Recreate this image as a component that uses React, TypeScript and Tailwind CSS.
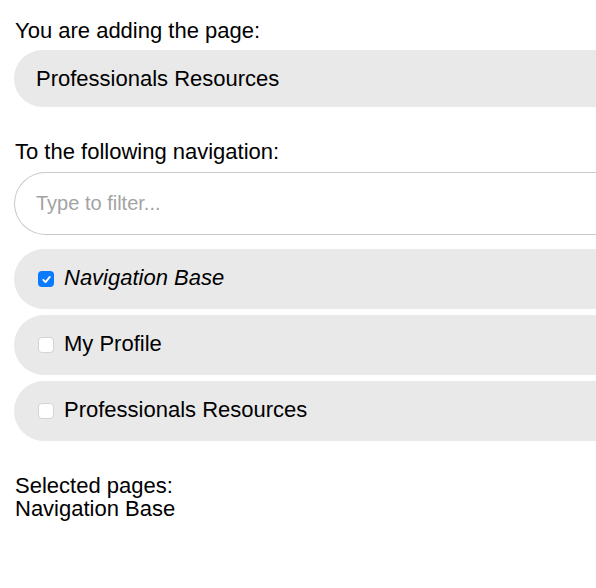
import React from "react";

const pages = [
  { name: "Navigation Base", checked: true },
  { name: "My Profile", checked: false },
  { name: "Professionals Resources", checked: false },
];

const Check: React.FC<{ checked: boolean }> = ({ checked }) =>
  checked ? (
    <span className="flex h-[16px] w-[16px] items-center justify-center rounded-[4px] bg-[#0a7aff]">
      <svg width="11" height="11" viewBox="0 0 12 12" fill="none">
        <path
          d="M2.5 6.3 L5 8.8 L9.6 3.2"
          stroke="white"
          strokeWidth="2"
          strokeLinecap="round"
          strokeLinejoin="round"
        />
      </svg>
    </span>
  ) : (
    <span className="h-[16px] w-[16px] rounded-[4px] border border-[#d4d4d4] bg-white" />
  );

const App: React.FC = () => {
  return (
    <div
      className="min-h-screen overflow-hidden bg-white pl-[14px] pt-[19px] text-[22px] leading-[23px] text-black"
      style={{ fontFamily: '"Liberation Sans", Arial, sans-serif' }}
    >
      <p className="pl-[1px]">You are adding the page:</p>
      <div className="mt-[8px] flex h-[57px] items-center rounded-l-[29px] bg-[#e9e9e9] pl-[22px]">
        Professionals Resources
      </div>

      <p className="mt-[33px] pl-[1px]">To the following navigation:</p>
      <input
        type="text"
        placeholder="Type to filter..."
        className="mt-[9px] block h-[63px] w-full rounded-l-[32px] border border-r-0 border-[#c9c9c9] bg-white pl-[21px] text-[20px] outline-none placeholder:text-[#a3a3a3]"
      />

      <ul className="mt-[14px] flex flex-col gap-[6px]">
        {pages.map((page) => (
          <li
            key={page.name}
            className="flex h-[60px] items-center gap-[10px] rounded-l-[30px] bg-[#e9e9e9] pl-[24px]"
          >
            <Check checked={page.checked} />
            <span className={page.checked ? "mb-[4px] italic" : "mb-[4px]"}>
              {page.name}
            </span>
          </li>
        ))}
      </ul>

      <div className="mt-[33px] pl-[1px]">
        <p>Selected pages:</p>
        <p>Navigation Base</p>
      </div>
    </div>
  );
};

export default App;
